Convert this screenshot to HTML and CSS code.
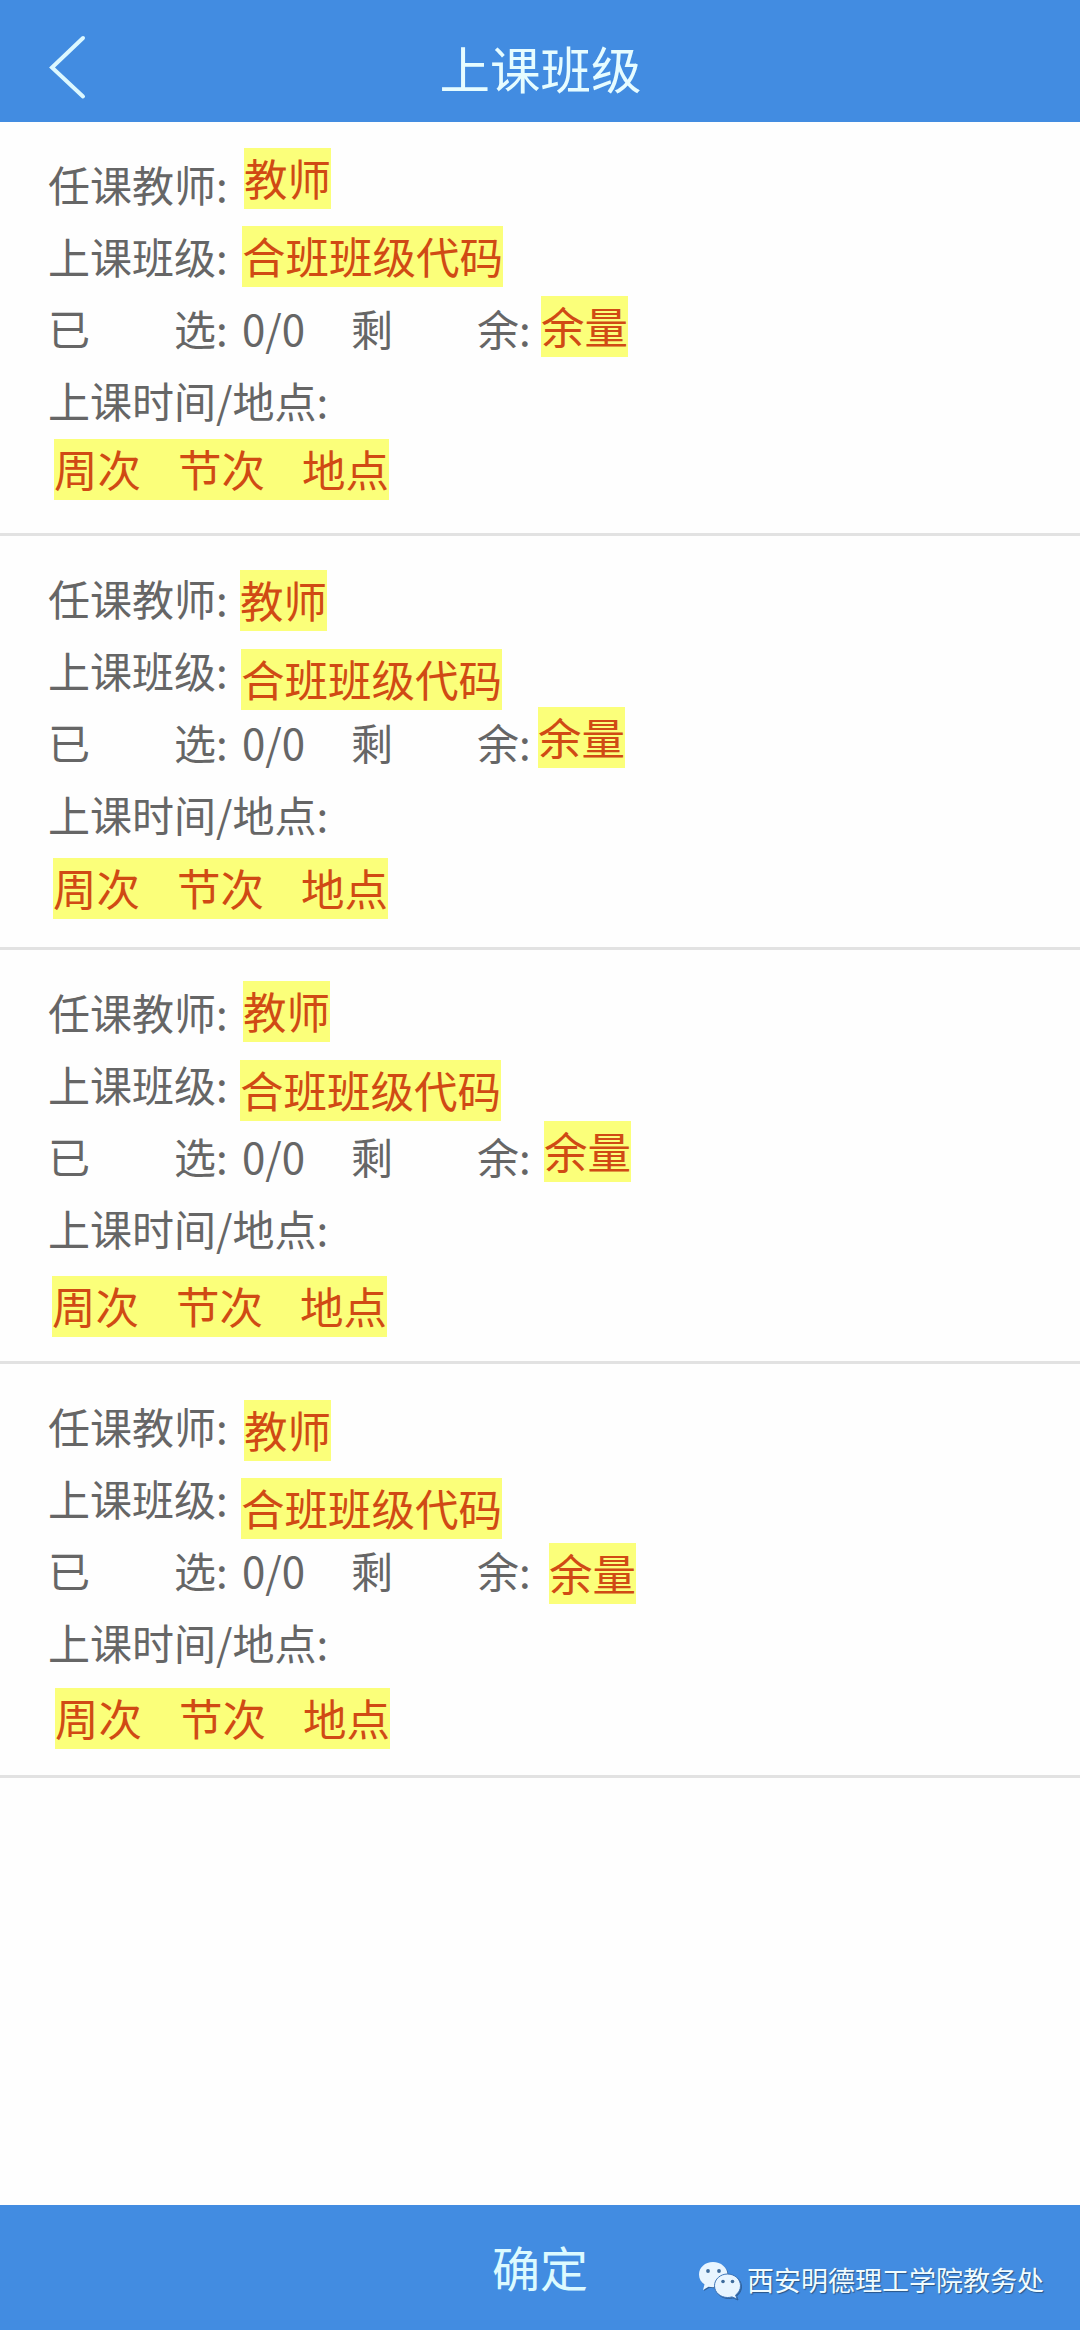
FILE: index.html
```html
<!DOCTYPE html>
<html lang="zh-CN">
<head>
    <meta charset="UTF-8">
    <title>上课班级</title>
    <link rel="stylesheet" href="styles.css">
</head>
<body>

    <header class="top-bar">
        <svg class="back" viewBox="0 0 40 66">
            <path d="M35 4 L4 33.5 L35 62.5"/>
        </svg>
        <h1>上课班级</h1>
    </header>

    <main class="class-list">
        <section class="class-item first">
            <div class="row"><span class="label">任课教师:</span><mark class="teacher">教师</mark></div>
            <div class="row"><span class="label">上课班级:</span><mark class="code">合班班级代码</mark></div>
            <div class="row"><span class="label">已　　选:</span><span class="count">0/0</span><span class="label">剩　　余:</span><mark class="left">余量</mark></div>
            <div class="row"><span class="label">上课时间/地点:</span></div>
            <div class="row"><mark class="place"><span>周次</span><span>节次</span><span>地点</span></mark></div>
        </section>

        <section class="class-item second">
            <div class="row"><span class="label">任课教师:</span><mark class="teacher">教师</mark></div>
            <div class="row"><span class="label">上课班级:</span><mark class="code">合班班级代码</mark></div>
            <div class="row"><span class="label">已　　选:</span><span class="count">0/0</span><span class="label">剩　　余:</span><mark class="left">余量</mark></div>
            <div class="row"><span class="label">上课时间/地点:</span></div>
            <div class="row"><mark class="place"><span>周次</span><span>节次</span><span>地点</span></mark></div>
        </section>

        <section class="class-item third">
            <div class="row"><span class="label">任课教师:</span><mark class="teacher">教师</mark></div>
            <div class="row"><span class="label">上课班级:</span><mark class="code">合班班级代码</mark></div>
            <div class="row"><span class="label">已　　选:</span><span class="count">0/0</span><span class="label">剩　　余:</span><mark class="left">余量</mark></div>
            <div class="row"><span class="label">上课时间/地点:</span></div>
            <div class="row"><mark class="place"><span>周次</span><span>节次</span><span>地点</span></mark></div>
        </section>

        <section class="class-item fourth">
            <div class="row"><span class="label">任课教师:</span><mark class="teacher">教师</mark></div>
            <div class="row"><span class="label">上课班级:</span><mark class="code">合班班级代码</mark></div>
            <div class="row"><span class="label">已　　选:</span><span class="count">0/0</span><span class="label">剩　　余:</span><mark class="left">余量</mark></div>
            <div class="row"><span class="label">上课时间/地点:</span></div>
            <div class="row"><mark class="place"><span>周次</span><span>节次</span><span>地点</span></mark></div>
        </section>
    </main>

    <footer class="bottom-bar">
        <span class="confirm">确定</span>
        <div class="account">
            <svg class="wechat" viewBox="0 0 44 38">
                <path class="bubble" d="M15 1 C7 1 1 6.500 1 13.500 C1 18 3 21 6.500 23.500 L5 29 L10.500 25.700 C12 26 13.500 26.200 15 26.200 C23 26.200 29.500 20.500 29.500 13.500 C29.500 6.500 23 1 15 1 Z"/>
                <path class="bubble front" d="M29.500 13 C22.500 13 16.500 18 16.500 24.800 C16.500 31.500 22.500 36.500 29.500 36.500 C31 36.500 32.500 36.300 34 35.900 L39 38 L37.600 34 C40.500 32 42.500 28.800 42.500 24.800 C42.500 18 36.500 13 29.500 13 Z"/>
                <circle class="eye" cx="10" cy="10" r="1.900"/>
                <circle class="eye" cx="21" cy="10" r="1.900"/>
                <circle class="eye" cx="25" cy="20.500" r="1.800"/>
                <circle class="eye" cx="34.500" cy="20.500" r="1.800"/>
            </svg>
            <span>西安明德理工学院教务处</span>
        </div>
    </footer>

</body>
</html>
```

FILE: styles.css
```css
* {
    box-sizing: border-box;
}

body {
    margin: 0;
    min-height: 2330px;
    display: flex;
    flex-direction: column;
    background-color: #fefefe;
    font-family: "Noto Sans CJK SC", sans-serif;
    color: #666;
}

.top-bar {
    height: 122px;
    padding: 0 48px;
    display: grid;
    grid-template-columns: 40px 1fr 40px;
    align-items: center;
    background-color: #428ce1;
}

.back {
    width: 40px;
    height: 66px;
    margin-top: 12px;
    fill: none;
    stroke: #dcf8ff;
    stroke-width: 4;
    stroke-linecap: round;
}

h1 {
    margin: 12px 0 0 1px;
    text-align: center;
    font-size: 50.5px;
    font-weight: 400;
    line-height: 60px;
    color: #e6fcff;
}

.class-list {
    flex: 1;
}

.class-item {
    height: 414px;
    padding: 28px 48px 0;
    border-bottom: 3px solid #e2e2e2;
}

.row {
    display: flex;
    align-items: flex-start;
    height: 72px;
    font-size: 42px;
    line-height: 67px;
    white-space: nowrap;
}

.row .label {
    flex-shrink: 0;
}

.row .label:first-child {
    min-width: 194px;
}

.count {
    width: 109px;
}

.count + .label {
    width: 189px;
}

mark {
    height: 61px;
    font-size: 43.5px;
    line-height: 59px;
    background-color: #fbff7a;
    color: #d04a14;
}

.place {
    display: flex;
    gap: 37px;
}

/* highlight labels, placed by hand in every item */
.first .teacher { margin: -2px 0 0 2px; }
.first .code { margin: 4px 0 0 0; }
.first .left { margin: 2px 0 0 1px; }
.first .place { margin: 1px 0 0 6px; }

.second .teacher { margin: 6px 0 0 -2px; }
.second .code { margin: 13px 0 0 -1px; }
.second .left { margin: -1px 0 0 -2px; }
.second .place { margin: 6px 0 0 5px; }

.third .teacher { margin: 3px 0 0 1px; }
.third .code { margin: 10px 0 0 -2px; }
.third .left { margin: -1px 0 0 4px; }
.third .place { margin: 10px 0 0 4px; }

.fourth .teacher { margin: 8px 0 0 2px; }
.fourth .code { margin: 14px 0 0 -1px; }
.fourth .left { margin: 7px 0 0 9px; }
.fourth .place { margin: 8px 0 0 7px; }

.bottom-bar {
    position: relative;
    height: 125px;
    display: flex;
    align-items: center;
    justify-content: center;
    background-color: #428ce1;
    font-size: 48px;
    color: #dcfaff;
}

.confirm {
    padding-bottom: 3px;
}

.account {
    position: absolute;
    right: 36px;
    bottom: 30px;
    display: flex;
    align-items: center;
    gap: 5px;
    font-size: 27px;
    line-height: 40px;
    color: #f0fcff;
    text-shadow: 1px 1px 1px #2b5688;
}

.wechat {
    width: 44px;
    height: 38px;
    overflow: visible;
}

.bubble {
    fill: #e8f5ff;
    filter: drop-shadow(1px 1px 0.5px #2f5f98);
}

.front {
    stroke: #3c74b8;
    stroke-width: 1;
}

.eye {
    fill: #3f6c9c;
}
```
